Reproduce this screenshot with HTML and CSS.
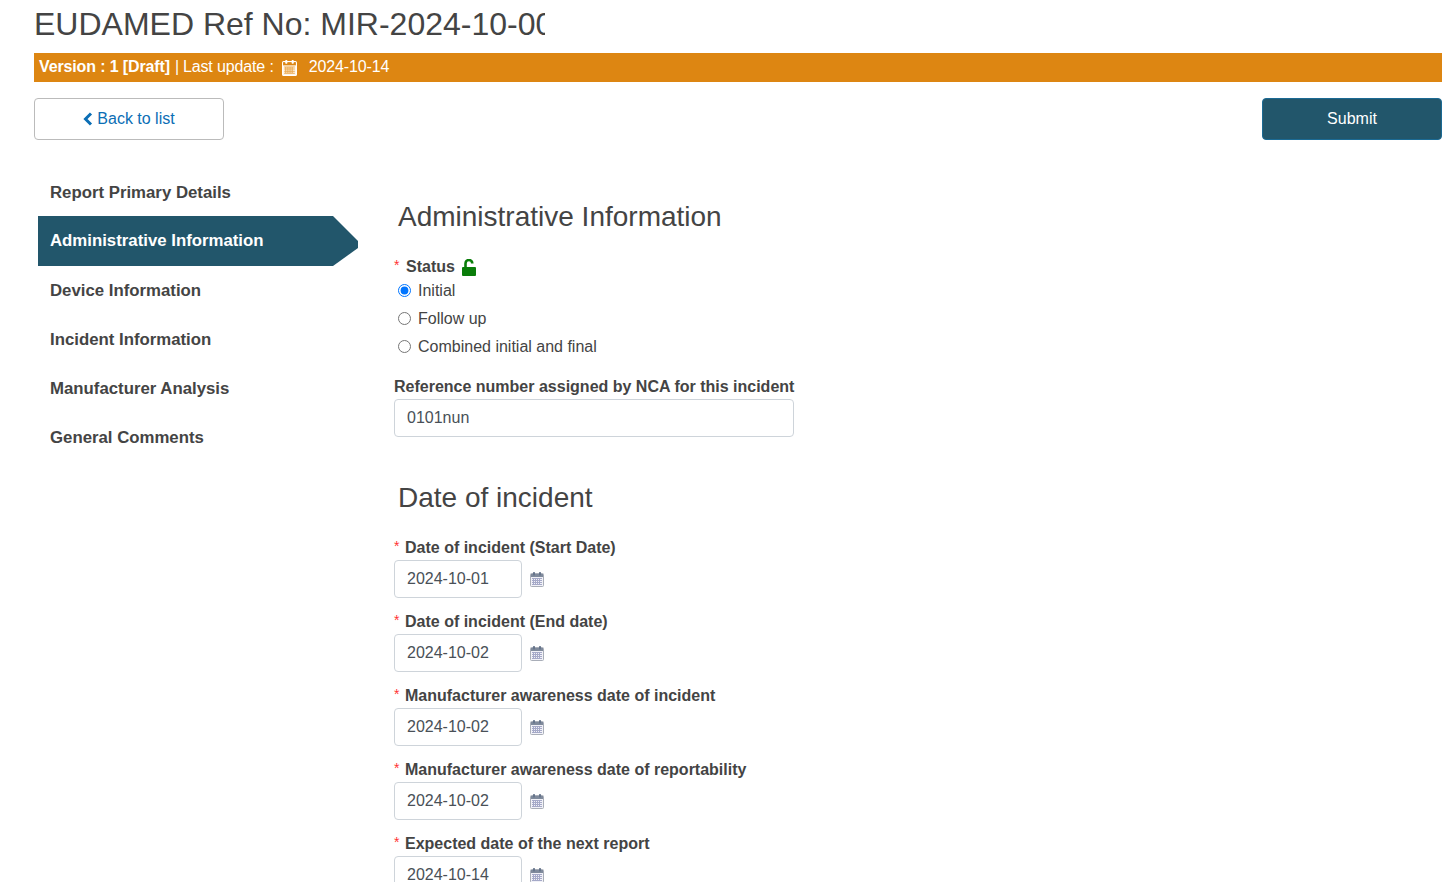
FILE: index.html
```html
<!DOCTYPE html>
<html lang="en">
<head>
<meta charset="utf-8">
<title>EUDAMED Ref No</title>
<link rel="stylesheet" href="styles.css">
</head>
<body>
<svg class="defs" width="0" height="0" aria-hidden="true">
  <symbol id="cal" viewBox="0 0 14 15">
    <rect x="0.5" y="1.5" width="13" height="13" rx="1" fill="var(--cal-bg)" stroke="var(--cal-frame)"/>
    <rect x="1" y="2" width="12" height="3" fill="var(--cal-band)"/>
    <rect x="3" y="0" width="2" height="3.5" rx="0.7" fill="var(--cal-tab)"/>
    <rect x="9" y="0" width="2" height="3.5" rx="0.7" fill="var(--cal-tab)"/>
    <path d="M2 6.5h10M2 8.5h10M2 10.5h10M2 12.5h10M3.5 6v7M5.5 6v7M7.5 6v7M9.5 6v7" stroke="var(--cal-grid)" stroke-width="1" fill="none"/>
  </symbol>
</svg>
<div class="page">
  <h1 class="title">EUDAMED Ref No: MIR-2024-10-0001</h1>
  <div class="version">
    <strong>Version : 1 [Draft]</strong>
    <span class="sep">|</span>
    <span>Last update :</span>
    <svg class="cal cal-light"><use href="#cal"/></svg>
    <span class="version-date">2024-10-14</span>
  </div>
  <div class="actions">
    <a class="btn btn-back" href="#">
      <svg class="chev" viewBox="0 0 10 14"><path d="M8 1.5 2.5 7 8 12.5" fill="none" stroke="currentColor" stroke-width="3"/></svg>
      Back to list
    </a>
    <a class="btn btn-submit" href="#">Submit</a>
  </div>
  <div class="main">
    <nav class="side">
      <a class="side-item first" href="#">Report Primary Details</a>
      <a class="side-item active" href="#">Administrative Information</a>
      <a class="side-item" href="#">Device Information</a>
      <a class="side-item" href="#">Incident Information</a>
      <a class="side-item" href="#">Manufacturer Analysis</a>
      <a class="side-item" href="#">General Comments</a>
    </nav>
    <div class="content">
      <h2 class="section">Administrative Information</h2>
      <div class="status-label">
        <span class="req">*</span><b>Status</b>
        <svg class="lock" viewBox="0 0 14 17"><path d="M3.5 8V4.4a3.4 3.4 0 0 1 6.8 0" fill="none" stroke="#0a7d0a" stroke-width="2.6"/><rect x="0" y="8" width="14" height="9" rx="1" fill="#0a7d0a"/></svg>
      </div>
      <label class="radio"><input type="radio" name="st" checked>Initial</label>
      <label class="radio"><input type="radio" name="st">Follow up</label>
      <label class="radio"><input type="radio" name="st">Combined initial and final</label>
      <div class="ref-label">Reference number assigned by NCA for this incident</div>
      <input class="field field-wide" type="text" value="0101nun">
      <h2 class="section section-date">Date of incident</h2>
      <div class="date-group">
        <div class="date-label"><span class="req">*</span><b>Date of incident (Start Date)</b></div>
        <div class="date-row"><input class="field field-date" type="text" value="2024-10-01"><svg class="cal cal-dark"><use href="#cal"/></svg></div>
      </div>
      <div class="date-group">
        <div class="date-label"><span class="req">*</span><b>Date of incident (End date)</b></div>
        <div class="date-row"><input class="field field-date" type="text" value="2024-10-02"><svg class="cal cal-dark"><use href="#cal"/></svg></div>
      </div>
      <div class="date-group">
        <div class="date-label"><span class="req">*</span><b>Manufacturer awareness date of incident</b></div>
        <div class="date-row"><input class="field field-date" type="text" value="2024-10-02"><svg class="cal cal-dark"><use href="#cal"/></svg></div>
      </div>
      <div class="date-group">
        <div class="date-label"><span class="req">*</span><b>Manufacturer awareness date of reportability</b></div>
        <div class="date-row"><input class="field field-date" type="text" value="2024-10-02"><svg class="cal cal-dark"><use href="#cal"/></svg></div>
      </div>
      <div class="date-group">
        <div class="date-label"><span class="req">*</span><b>Expected date of the next report</b></div>
        <div class="date-row"><input class="field field-date" type="text" value="2024-10-14"><svg class="cal cal-dark"><use href="#cal"/></svg></div>
      </div>
    </div>
  </div>
</div>
</body>
</html>
```
FILE: styles.css
```css
* { box-sizing: border-box; }
html, body { margin: 0; height: 882px; overflow: hidden; }
body { font-family: "Liberation Sans", Arial, sans-serif; font-size: 16px; color: #444; background: #fff; }
.defs { display: block; height: 0; }
.page { padding: 0 8px 0 34px; }
.title { margin: 0; width: 511px; height: 53px; overflow: hidden; white-space: nowrap; font-size: 32px; font-weight: 400; line-height: 48px; color: #444; }
.version { height: 29px; background: #dd8612; color: #fff; padding-left: 5px; display: flex; align-items: center; line-height: 27px; padding-bottom: 2px; white-space: nowrap; letter-spacing: -0.13px; }
.version strong { font-weight: 700; }
.sep { margin: 0 4px 0 5px; }
.cal { display: block; }
.cal-light { width: 15px; height: 16px; margin: 2px 0 0 8px; --cal-bg: #fff6e8; --cal-frame: #fff; --cal-band: #dd8612; --cal-tab: #fff; --cal-grid: #eba94f; }
.version-date { margin-left: 12px; }
.actions { display: flex; justify-content: space-between; margin-top: 16px; }
.btn { height: 42px; display: flex; align-items: center; justify-content: center; text-decoration: none; border-radius: 4px; }
.btn-back { width: 190px; border: 1px solid #bbb; color: #0b6eb5; gap: 4px; }
.chev { width: 10px; height: 14px; }
.btn-submit { width: 180px; background: #22566b; border: 1px solid #1b6a94; color: #fff; }
.main { display: flex; margin-top: 28px; }
.side { width: 324px; padding: 0 0 0 4px; flex: none; font-weight: 700; font-size: 16.8px; }
.side-item { display: flex; align-items: center; height: 49px; padding-left: 12px; color: #444; text-decoration: none; }
.side-item.first { height: 48px; padding-top: 2px; }
.side-item.active { height: 50px; width: 320px; background: #22566b; color: #fff; clip-path: polygon(0 0, 295px 0, 100% 50%, 100% 64%, 295px 100%, 0 100%); }
.content { flex: 1; padding: 32px 0 0 36px; }
.section { margin: 0 0 0 4px; font-size: 28px; font-weight: 400; line-height: 34px; color: #444; }
.status-label { display: flex; align-items: center; margin-top: 21px; height: 24px; }
.req { color: #f33; font-size: 14px; font-weight: 400; width: 12px; flex: none; margin-top: -5px; line-height: 12px; }
.date-label .req { width: 11px; }
.lock { width: 14px; height: 17px; margin-left: 7px; }
.radio { display: flex; align-items: center; height: 28px; margin: 0 0 0 4px; }
.radio input { margin: -2px 7px 0 0; width: 13px; height: 13px; flex: none; }
.status-label + .radio { margin-top: -2px; }
.ref-label { margin-top: 14px; font-weight: 700; line-height: 24px; margin-bottom: 0; }
.field { display: block; height: 38px; border: 1px solid #ced4da; border-radius: 4px; padding: 0 12px; font: 16px "Liberation Sans", Arial, sans-serif; color: #495057; background: #fff; }
.field-wide { width: 400px; }
.section-date { margin-top: 44px; }
.date-group { height: 74px; }
.section-date + .date-group { margin-top: 21px; }
.date-label { display: flex; align-items: center; height: 24px; }
.date-row { display: flex; align-items: center; }
.field-date { width: 128px; }
.cal-dark { width: 14px; height: 15px; margin-left: 8px; --cal-bg: #f1f1f7; --cal-frame: #a9aeb8; --cal-band: #7f8a9c; --cal-tab: #66758c; --cal-grid: #a5a9c8; }
```
